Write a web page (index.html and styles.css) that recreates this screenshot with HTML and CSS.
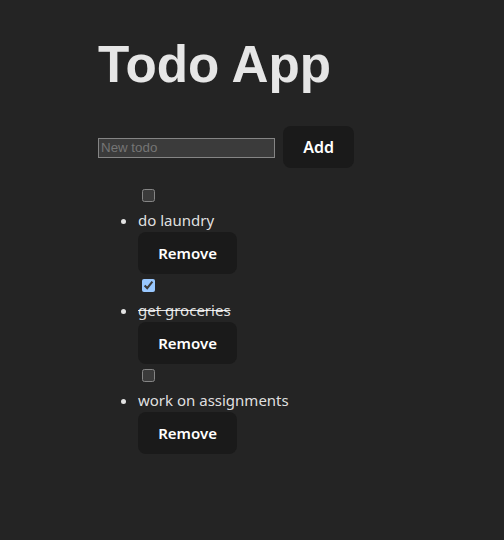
FILE: index.html
```html
<!DOCTYPE html>
<html lang="en">
<head>
<meta charset="UTF-8">
<title>Todo App</title>
<link rel="stylesheet" href="styles.css">
</head>
<body>
<div class="app">
  <h1 class="title">Todo App</h1>
  <form class="add-row" onsubmit="return false">
    <input class="new-input" type="text" placeholder="New todo">
    <button class="btn add" type="submit">Add</button>
  </form>
  <ul class="todo-list">
    <li class="todo">
      <input class="check" type="checkbox">
      <span class="todo-text">do laundry</span>
      <button class="btn remove" type="button">Remove</button>
    </li>
    <li class="todo">
      <input class="check" type="checkbox" checked>
      <span class="todo-text done">get groceries</span>
      <button class="btn remove" type="button">Remove</button>
    </li>
    <li class="todo">
      <input class="check" type="checkbox">
      <span class="todo-text">work on assignments</span>
      <button class="btn remove" type="button">Remove</button>
    </li>
  </ul>
</div>
</body>
</html>
```
FILE: styles.css
```css
:root {
  color-scheme: dark;
}
body {
  margin: 0;
  background: #242424;
  color: rgba(255, 255, 255, 0.87);
  font-family: "Noto Sans", "Open Sans", sans-serif;
  font-size: 15px;
  line-height: 1.5;
}
.app {
  padding: 37px 0 0 98px;
}
.title {
  margin: 0;
  font-family: "Liberation Sans", Arial, sans-serif;
  font-size: 51.2px;
  line-height: 1.1;
  font-weight: 700;
  color: #e6e6e6;
}
.add-row {
  display: flex;
  align-items: center;
  gap: 8px;
  margin-top: 33px;
}
.new-input {
  box-sizing: border-box;
  width: 177px;
  height: 20px;
  margin: 1px 0 0;
  padding: 1px 2px;
  background: #3b3b3b;
  border: 1px solid #858585;
  border-radius: 0;
  color: #fff;
  font-family: "Liberation Sans", Arial, sans-serif;
  font-size: 13.33px;
}
.new-input::placeholder {
  color: #757575;
}
.btn {
  box-sizing: border-box;
  height: 42px;
  padding: 0 19.2px;
  border: 1px solid transparent;
  border-radius: 8px;
  background: #1a1a1a;
  color: #fff;
  font-family: "Noto Sans", "Open Sans", sans-serif;
  font-size: 15px;
  font-weight: 600;
  line-height: 21px;
  cursor: pointer;
}
.add {
  font-size: 16px;
}
.todo-list {
  margin: 18px 0 0;
  padding-left: 40px;
}
.todo {
  padding: 3px 0 2px;
}
.check {
  display: block;
  width: 13px;
  height: 13px;
  margin: 0 3px 0 4px;
}
.todo-text {
  display: block;
  margin-top: 6px;
  line-height: 24px;
}
.done {
  text-decoration: line-through;
}
.remove {
  display: block;
}
```
